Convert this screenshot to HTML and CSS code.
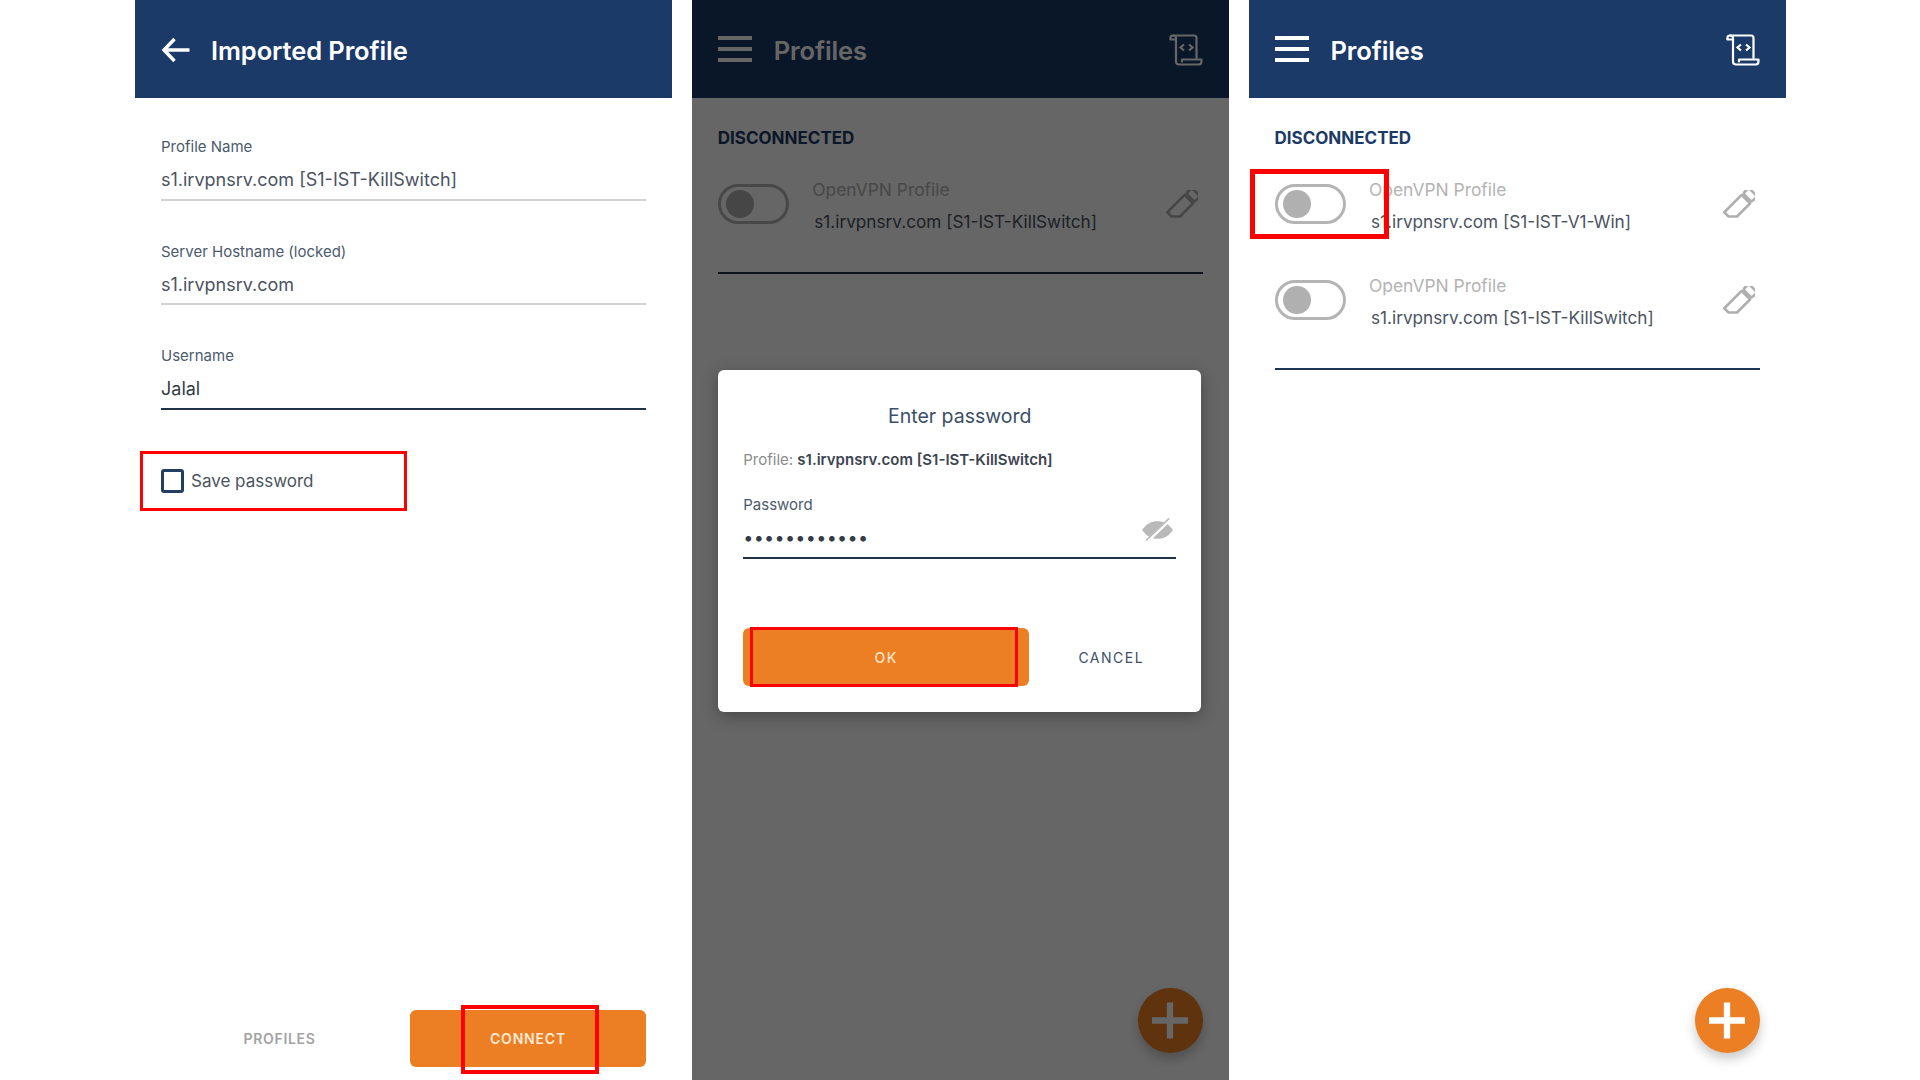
FILE: index.html
```html
<!DOCTYPE html>
<html lang="en">
<head>
<meta charset="utf-8">
<title>Profiles</title>
<link rel="stylesheet" href="styles.css">
</head>
<body>
<svg class="defs" width="0" height="0" aria-hidden="true">
  <symbol id="pencil" viewBox="0 0 32 32">
    <g transform="translate(16.500 15.500) rotate(45)" fill="none" stroke="currentColor" stroke-width="2.600" stroke-linejoin="round">
      <rect x="-6" y="-19" width="12" height="8" rx="2.500"/>
      <path d="M-6 -9H6V9.500L0 15.500H-6Z"/>
    </g>
  </symbol>
  <symbol id="scroll" viewBox="0 0 34 32">
    <g fill="none" stroke="currentColor" stroke-width="2.200" stroke-linejoin="round" stroke-linecap="round">
      <path d="M4 1.500H25Q27.500 1.500 27.500 4V24"/>
      <path d="M1.500 5V3.500Q1.500 1.500 4 1.500Q7 1.500 7 4V27.500Q7 30.500 10 30.500H30Q32.500 30.500 32.500 27V25.500H13V27.500"/>
      <path d="M1.500 5.500H7"/>
    </g>
    <path d="M15 10.500L11.500 13.500L15 16.500M20 10.500L23.500 13.500L20 16.500" fill="none" stroke="currentColor" stroke-width="2.200"/>
  </symbol>
  <symbol id="plus" viewBox="0 0 40 40">
    <path d="M16.500 0h7v16.500H40v7H23.500V40h-7V23.500H0v-7h16.500z" fill="currentColor"/>
  </symbol>
</svg>

<main class="stage">
  <section class="panel panel-form">
    <header class="topbar">
      <svg class="back" viewBox="0 0 28 26" aria-hidden="true"><path d="M13 2L2.500 13L13 24M3 13H28" fill="none" stroke="currentColor" stroke-width="3.400"/></svg>
      <h1 class="title">Imported Profile</h1>
    </header>
    <div class="form">
      <div class="field">
        <div class="label">Profile Name</div>
        <div class="value">s1.irvpnsrv.com [S1-IST-KillSwitch]</div>
      </div>
      <div class="field">
        <div class="label">Server Hostname (locked)</div>
        <div class="value">s1.irvpnsrv.com</div>
      </div>
      <div class="field field-active">
        <div class="label">Username</div>
        <div class="value value-dark">Jalal</div>
      </div>
      <div class="save">
        <span class="check"></span>
        <span class="save-text">Save password</span>
        <span class="mark mark-save"></span>
      </div>
    </div>
    <div class="actions">
      <span class="link-btn">PROFILES</span>
      <span class="connect">CONNECT<span class="mark mark-connect"></span></span>
    </div>
  </section>

  <section class="panel panel-modal">
    <header class="topbar">
      <div class="burger"><i></i><i></i><i></i></div>
      <h1 class="title">Profiles</h1>
      <svg class="scroll"><use href="#scroll"/></svg>
    </header>
    <div class="list">
      <h2 class="section">DISCONNECTED</h2>
      <div class="row">
        <span class="toggle"><i></i></span>
        <div class="row-text">
          <div class="kind">OpenVPN Profile</div>
          <div class="name">s1.irvpnsrv.com [S1-IST-KillSwitch]</div>
        </div>
        <svg class="pencil"><use href="#pencil"/></svg>
      </div>
    </div>
    <div class="fab"><svg class="plus"><use href="#plus"/></svg></div>
    <div class="scrim"></div>
    <div class="dialog">
      <div class="dialog-title">Enter password</div>
      <div class="dialog-profile">Profile: <b>s1.irvpnsrv.com [S1-IST-KillSwitch]</b></div>
      <div class="label pw-label">Password</div>
      <div class="pw-input">
        <span class="dots">••••••••••••</span>
        <svg class="eye" viewBox="0 0 34 24" aria-hidden="true">
          <path d="M1 12C7 4 12 3 17 3S27 4 33 12C27 20 22 21 17 21S7 20 1 12Z" fill="#b9b9b9"/>
          <path d="M7 23L30 1" stroke="#fff" stroke-width="3.500"/>
          <path d="M5 23L29 0" stroke="#b9b9b9" stroke-width="1.500"/>
        </svg>
      </div>
      <div class="dialog-actions">
        <span class="ok">OK<span class="mark mark-ok"></span></span>
        <span class="cancel">CANCEL</span>
      </div>
    </div>
  </section>

  <section class="panel">
    <header class="topbar">
      <div class="burger"><i></i><i></i><i></i></div>
      <h1 class="title">Profiles</h1>
      <svg class="scroll"><use href="#scroll"/></svg>
    </header>
    <div class="list">
      <h2 class="section">DISCONNECTED</h2>
      <div class="row">
        <span class="toggle"><i></i><span class="mark mark-toggle"></span></span>
        <div class="row-text">
          <div class="kind">OpenVPN Profile</div>
          <div class="name">s1.irvpnsrv.com [S1-IST-V1-Win]</div>
        </div>
        <svg class="pencil"><use href="#pencil"/></svg>
      </div>
      <div class="row">
        <span class="toggle"><i></i></span>
        <div class="row-text">
          <div class="kind">OpenVPN Profile</div>
          <div class="name">s1.irvpnsrv.com [S1-IST-KillSwitch]</div>
        </div>
        <svg class="pencil"><use href="#pencil"/></svg>
      </div>
    </div>
    <div class="fab"><svg class="plus"><use href="#plus"/></svg></div>
  </section>
</main>
</body>
</html>
```

FILE: styles.css
```css
* { box-sizing: border-box; }

html, body { margin: 0; height: 100%; }

body {
  background: #fff;
  color: #3b4656;
  font-family: Inter, "Noto Sans", sans-serif;
  overflow: hidden;
}

.defs { position: absolute; }

.stage {
  display: flex;
  gap: 19.750px;
  height: 1080px;
  padding-left: 135px;
}

.panel {
  position: relative;
  display: flex;
  flex-direction: column;
  flex: none;
  width: 537px;
  height: 1080px;
  background: #fff;
  overflow: hidden;
}

.topbar {
  display: flex;
  align-items: center;
  flex: none;
  height: 98px;
  padding: 2px 26px 0;
  background: #1b3a68;
  color: #fff;
}

.title {
  margin: 1px 0 0;
  font-size: 25.500px;
  font-weight: 600;
  line-height: 1;
  letter-spacing: -0.1px;
}

.back { width: 29px; height: 26px; margin-right: 21px; margin-top: -1px; }

.burger {
  display: flex;
  flex-direction: column;
  gap: 7px;
  width: 34px;
  margin-right: 22px;
  margin-top: -2px;
}
.burger i { display: block; height: 4px; background: #fff; }

.scroll { width: 34px; height: 32px; margin-left: auto; margin-top: 0; color: #fff; }

/* Form panel */
.form { padding: 37px 26px 0; }

.field { height: 104.500px; }

.label { font-size: 15px; line-height: 24px; color: #4c5a6d; }

.value {
  height: 41.500px;
  padding-top: 9px;
  font-size: 18px;
  line-height: 24px;
  color: #4a5361;
  border-bottom: 2px solid #d2d2d2;
}
.value-dark { color: #333c47; }
.field-active .value { border-bottom-color: #1f3349; }

.save {
  position: relative;
  display: flex;
  align-items: center;
  gap: 7px;
  height: 24px;
  margin-top: 20.500px;
}
.check {
  width: 23px;
  height: 24px;
  border: 3px solid #233f5f;
  border-radius: 3px;
}
.save-text { font-size: 17px; color: #4a5361; }

.actions {
  display: flex;
  align-items: center;
  margin-top: auto;
  padding: 0 26px 13px 0;
}
.link-btn {
  width: 275px;
  padding-left: 14px;
  text-align: center;
  font-size: 14px;
  font-weight: 600;
  letter-spacing: 0.7px;
  color: #a3a3a3;
}
.connect {
  position: relative;
  display: flex;
  align-items: center;
  justify-content: center;
  width: 236px;
  height: 57px;
  background: #ec7f24;
  border-radius: 6px;
  color: #fbe9d4;
  font-size: 14px;
  font-weight: 600;
  letter-spacing: 0.8px;
}

/* Annotation rectangles */
.mark { position: absolute; border: 4px solid #fe0000; pointer-events: none; }
.mark-save { left: -21px; top: -18px; width: 267px; height: 60px; border-width: 3px; }
.mark-connect { left: 51px; top: -5px; width: 138px; height: 69px; }
.mark-ok { left: 7px; top: -1px; width: 268px; height: 60px; border-width: 3px; }
.mark-toggle { left: -28px; top: -18px; width: 139px; height: 70px; border-width: 5px; }

/* Profile list */
.list { padding: 0 26px 20px; position: relative; }
.list::after {
  content: "";
  display: block;
  height: 2px;
  margin-top: 20px;
  background: #1f3452;
}

.section {
  margin: 0;
  padding-top: 30px;
  height: 58px;
  font-size: 17px;
  font-weight: 700;
  line-height: 20px;
  color: #1c3a66;
}

.row {
  display: flex;
  align-items: center;
  height: 96px;
}

.toggle {
  position: relative;
  flex: none;
  display: flex;
  align-items: center;
  width: 71px;
  height: 40px;
  margin-right: 23.500px;
  padding-left: 5px;
  border: 3px solid #b4b4b4;
  border-radius: 20px;
}
.toggle i {
  width: 28px;
  height: 28px;
  border-radius: 50%;
  background: #b0b0b0;
}

.row-text { flex: 1; padding-top: 3px; }
.kind { font-size: 17.400px; line-height: 32px; color: #b3b3b3; }
.name { padding-left: 2px; font-size: 17.200px; line-height: 32px; color: #4a5361; }

.pencil { flex: none; width: 32px; height: 32px; margin-right: 5px; margin-top: 4px; color: #aeaeae; }

.fab {
  position: absolute;
  right: 26px;
  bottom: 27px;
  display: flex;
  align-items: center;
  justify-content: center;
  width: 65px;
  height: 65px;
  border-radius: 50%;
  background: #ec7f24;
  box-shadow: 0 6px 12px rgba(0, 0, 0, .22);
  color: #fff;
}
.plus { width: 36px; height: 37px; }

/* Modal */
.scrim {
  position: absolute;
  inset: 0;
  background: rgba(0, 0, 0, .6);
}

.dialog {
  position: absolute;
  left: 26.500px;
  top: 370px;
  width: 483px;
  height: 342px;
  padding: 0 25px;
  background: #fff;
  border-radius: 6px;
  box-shadow: 0 4px 16px rgba(0, 0, 0, .3);
}

.dialog-title {
  padding-top: 33px;
  text-align: center;
  font-size: 19.500px;
  line-height: 26px;
  color: #3b4f68;
}
.dialog-profile {
  margin-top: 20px;
  font-size: 15px;
  line-height: 22px;
  color: #8b8b8b;
}
.dialog-profile b { font-weight: 600; color: #3c4450; }

.pw-label { margin-top: 22px; }

.pw-input {
  position: relative;
  display: flex;
  justify-content: space-between;
  height: 42px;
  border-bottom: 2px solid #1f3349;
}
.dots {
  padding-top: 9px;
  font-size: 18px;
  line-height: 24px;
  letter-spacing: 0.300px;
  color: #333c47;
}
.eye { width: 33px; height: 24px; margin-right: 2px; margin-top: 1px; }

.dialog-actions {
  display: flex;
  align-items: center;
  margin-top: 69px;
}
.ok {
  position: relative;
  display: flex;
  align-items: center;
  justify-content: center;
  width: 286px;
  height: 58px;
  background: #ec7f24;
  border-radius: 6px;
  color: #fbe2c4;
  font-size: 14px;
  font-weight: 500;
  letter-spacing: 1.500px;
}
.cancel {
  flex: 1;
  padding-left: 17px;
  text-align: center;
  font-size: 14px;
  font-weight: 400;
  letter-spacing: 1.500px;
  color: #3b4f68;
}
```
